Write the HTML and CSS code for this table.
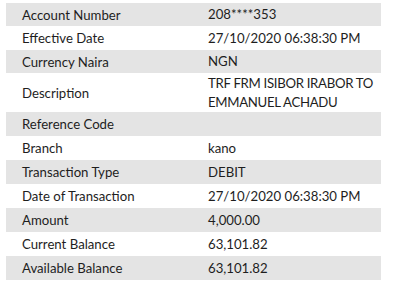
FILE: index.html
```html
<!DOCTYPE html>
<html>
<head>
<meta charset="utf-8">
<link rel="stylesheet" href="styles.css">
</head>
<body>
<div class="details">
  <div class="row shade short"><div class="label">Account Number</div><div class="value">208****353</div></div>
  <div class="row"><div class="label">Effective Date</div><div class="value">27/10/2020 06:38:30 PM</div></div>
  <div class="row shade short"><div class="label">Currency Naira</div><div class="value">NGN</div></div>
  <div class="row tall"><div class="label">Description</div><div class="value desc">TRF FRM ISIBOR IRABOR TO EMMANUEL ACHADU</div></div>
  <div class="row shade"><div class="label">Reference Code</div><div class="value"></div></div>
  <div class="row"><div class="label">Branch</div><div class="value">kano</div></div>
  <div class="row shade"><div class="label">Transaction Type</div><div class="value">DEBIT</div></div>
  <div class="row"><div class="label">Date of Transaction</div><div class="value">27/10/2020 06:38:30 PM</div></div>
  <div class="row shade"><div class="label">Amount</div><div class="value">4,000.00</div></div>
  <div class="row"><div class="label">Current Balance</div><div class="value">63,101.82</div></div>
  <div class="row shade"><div class="label">Available Balance</div><div class="value">63,101.82</div></div>
</div>
</body>
</html>
```
FILE: styles.css
```css
html, body {
  margin: 0;
  padding: 0;
  background: #ffffff;
}
body {
  padding: 3px 0 0 6px;
  font-family: Lato, "Liberation Sans", sans-serif;
  font-size: 13.2px;
  color: #1e1e1e;
}
.details {
  width: 375px;
  display: flex;
  flex-direction: column;
}
.row {
  display: grid;
  grid-template-columns: 202px 1fr;
  align-items: center;
  height: 24px;
}
.row.short {
  height: 23px;
}
.row.shade {
  background: #e4e4e4;
}
.row.tall {
  height: 39px;
}
.label {
  padding-left: 16px;
}
.value {
  line-height: 19px;
}
.value.desc {
  letter-spacing: -0.3px;
}
```
